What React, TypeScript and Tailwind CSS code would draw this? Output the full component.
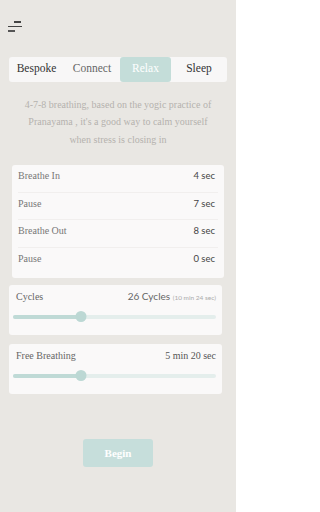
import React from 'react';

const serif = { fontFamily: '"Liberation Serif", "DejaVu Serif", serif' };
const sans = { fontFamily: 'Lato, "Open Sans", sans-serif' };

const tabs = ['Bespoke', 'Connect', 'Relax', 'Sleep'];

const phases = [
  { label: 'Breathe In', value: '4 sec' },
  { label: 'Pause', value: '7 sec' },
  { label: 'Breathe Out', value: '8 sec' },
  { label: 'Pause', value: '0 sec' },
];

function Slider({ pct }: { pct: number }) {
  return (
    <div className="relative h-[11px] flex items-center">
      <div className="w-full h-[4px] rounded-full bg-[#e4eeec]" />
      <div className="absolute left-0 h-[4px] rounded-full bg-[#bfdad6]" style={{ width: `${pct}%` }} />
      <div
        className="absolute w-[11px] h-[11px] rounded-full bg-[#bcd8d4] -translate-x-1/2"
        style={{ left: `${pct}%` }}
      />
    </div>
  );
}

export default function App() {
  return (
    <div className="w-[236px] h-[512px] bg-[#e9e7e3] overflow-hidden" style={serif}>
      {/* menu icon */}
      <div className="pt-[21px] pl-[8px] flex flex-col gap-[3px] w-[23px]">
        <span className="block h-[1.5px] w-[7px] ml-[6px] bg-[#444]" />
        <span className="block h-[1.5px] w-[14px] bg-[#444]" />
        <span className="block h-[1.5px] w-[7px] bg-[#555]" />
      </div>

      {/* tabs */}
      <div className="mt-[25px] mx-[9px] h-[25px] bg-[#f8f7f7] rounded-[3px] flex text-[11.5px]">
        {tabs.map((t) => (
          <div
            key={t}
            className={`flex items-center justify-center rounded-[3px] ${
              t === 'Relax'
                ? 'w-[51px] bg-[#c4ddd9] text-white'
                : t === 'Connect'
                ? 'w-[56px] text-[#666]'
                : t === 'Bespoke'
                ? 'w-[55px] text-[#333]'
                : 'flex-1 text-[#333]'
            }`}
          >
            {t}
          </div>
        ))}
      </div>

      {/* description */}
      <p className="mt-[14px] px-[20px] text-center text-[10px] leading-[17.5px] text-[#b5b2ae]">
        4-7-8 breathing, based on the yogic practice of Pranayama , it's a good way to calm yourself when stress is closing in
      </p>

      {/* phases */}
      <div className="mt-[17px] ml-[12px] mr-[12px] bg-[#faf9f9] rounded-[3px] px-[6px] pb-[3px]">
        {phases.map((p, i) => (
          <div
            key={i}
            className={`h-[27.5px] pt-[5px] flex items-start justify-between ${i < phases.length - 1 ? 'border-b border-[#f1efee]' : ''}`}
          >
            <span className="text-[10px] leading-[12px] text-[#777]">{p.label}</span>
            <span className="text-[9.5px] leading-[12px] text-[#444] pr-[3px]" style={sans}>
              {p.value}
            </span>
          </div>
        ))}
      </div>

      {/* cycles */}
      <div className="mt-[7px] ml-[9px] mr-[14px] h-[50px] bg-[#faf9f9] rounded-[3px] pt-[4px] pl-[4px] pr-[6px]">
        <div className="flex items-baseline justify-between pl-[3px] mb-[7px]">
          <span className="text-[10px] text-[#666]">Cycles</span>
          <span className="text-[10px] text-[#666]" style={sans}>
            26 Cycles <span className="text-[6.5px] text-[#aaa]">(10 min 24 sec)</span>
          </span>
        </div>
        <Slider pct={33.5} />
      </div>

      {/* free breathing */}
      <div className="mt-[9px] ml-[9px] mr-[14px] h-[50px] bg-[#faf9f9] rounded-[3px] pt-[4px] pl-[4px] pr-[6px]">
        <div className="flex items-baseline justify-between pl-[3px] mb-[7px]">
          <span className="text-[10px] text-[#666]">Free Breathing</span>
          <span className="text-[10px] text-[#555]">5 min 20 sec</span>
        </div>
        <Slider pct={33.5} />
      </div>

      {/* begin */}
      <div className="mt-[45px] flex justify-center">
        <button className="w-[70px] h-[28px] rounded-[3px] bg-[#c6dedb] text-white text-[11px] font-bold">
          Begin
        </button>
      </div>
    </div>
  );
}
